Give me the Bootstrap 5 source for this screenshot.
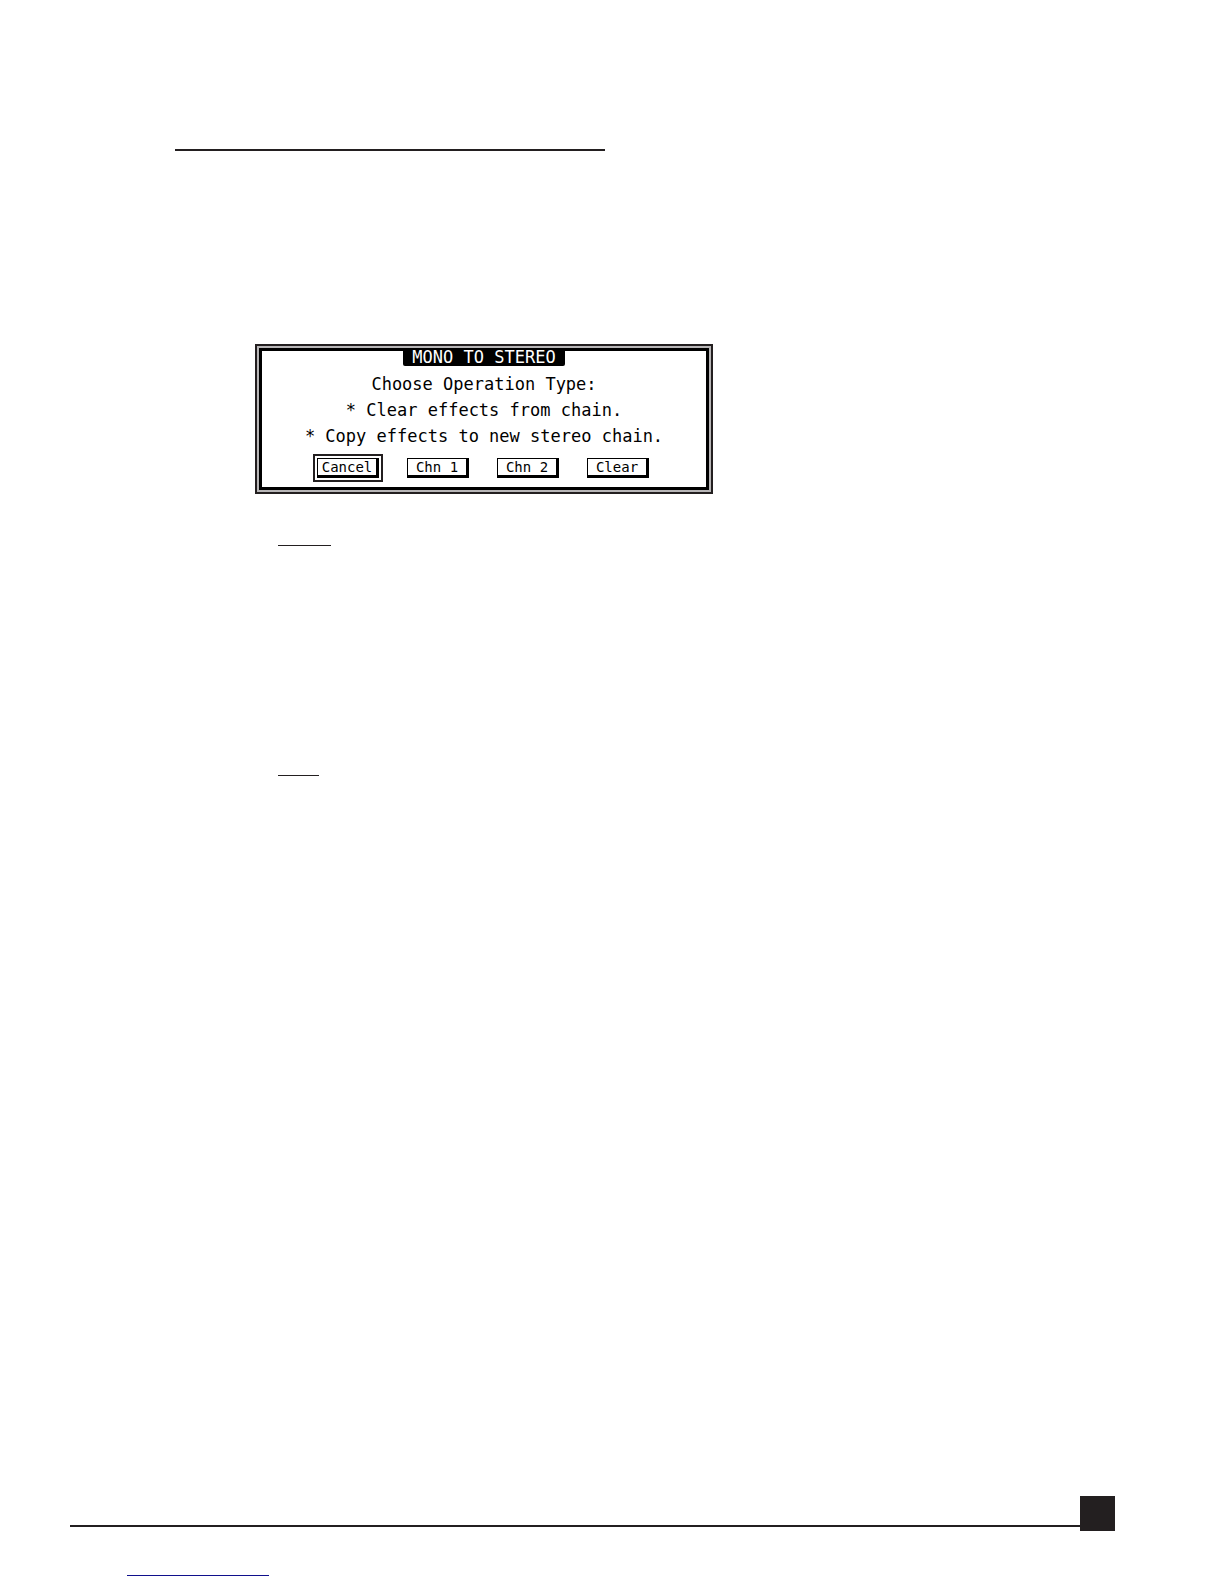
<!DOCTYPE html>
<html lang="en">
<head>
<meta charset="utf-8">
<meta name="viewport" content="width=device-width, initial-scale=1">
<title>Mono to Stereo</title>
<link href="https://cdn.jsdelivr.net/npm/bootstrap@5.3.0/dist/css/bootstrap.min.css" rel="stylesheet">
<style>
  body { background: #fff; color: #000; font-family: "DejaVu Sans Mono", monospace; }
  .sheet { min-height: 100vh; padding: 149px 109px 8px 70px; }
  .rule { height: 1px; margin: 0; border: 0; background: #231f20; opacity: 1; }
  .rule-heading { height: 2px; width: 430px; margin-left: 105px; }
  .rule-clear { width: 53px; margin: 51px 0 0 208px; }
  .rule-copy { width: 41px; margin: 229px 0 0 208px; }
  .rule-link { width: 142px; margin: 44px 0 0 57px; background: #10108c; }
  .lcd { width: 458px; max-width: 100%; margin: 193px 0 0 185px; padding: 2px; background: #b8b6b7; border: 2px solid #231f20; }
  .lcd-body { height: 142px; border: 3px solid #000; background: #fff; }
  .lcd-title { width: 162px; height: 15px; line-height: 12px; font-size: 17px; font-weight: 400; background: #000; color: #fff; border-radius: 0 0 2px 2px; margin: 0; }
  .lcd-text { font-size: 17px; line-height: 26px; margin: 5px 0 0; }
  .lcd-actions { gap: 28px; margin-top: 9px; padding-right: 2px; }
  .lcd-btn { width: 62px; height: 20px; padding: 0 2px 2px 0; font-size: 14px; line-height: 16px; background: #fff; color: #000; border: 1px solid #000; border-radius: 0; box-shadow: inset -2px -2px 0 #000; }
  .lcd-focus { outline: 2px solid #231f20; outline-offset: 2px; }
  .page-box { width: 35px; height: 35px; background: #231f20; }
  .rule-foot { height: 2px; margin-bottom: 4px; }
</style>
<script src="https://cdn.jsdelivr.net/npm/bootstrap@5.3.0/dist/js/bootstrap.bundle.min.js"></script>
</head>
<body>
<main class="sheet d-flex flex-column">
  <hr class="rule rule-heading">
  <section class="lcd" role="dialog" aria-labelledby="lcd-title">
    <div class="lcd-body d-flex flex-column align-items-center">
      <h1 class="lcd-title text-center text-nowrap" id="lcd-title">MONO TO STEREO</h1>
      <div class="lcd-text text-center text-nowrap">
        <div>Choose Operation Type:</div>
        <div>* Clear effects from chain.</div>
        <div>* Copy effects to new stereo chain.</div>
      </div>
      <div class="lcd-actions d-flex">
        <button type="button" class="btn lcd-btn lcd-focus">Cancel</button>
        <button type="button" class="btn lcd-btn">Chn 1</button>
        <button type="button" class="btn lcd-btn">Chn 2</button>
        <button type="button" class="btn lcd-btn">Clear</button>
      </div>
    </div>
  </section>
  <hr class="rule rule-clear">
  <hr class="rule rule-copy">
  <footer class="mt-auto">
    <div class="d-flex align-items-end">
      <hr class="rule rule-foot flex-grow-1">
      <div class="page-box"></div>
    </div>
    <hr class="rule rule-link">
  </footer>
</main>
</body>
</html>
